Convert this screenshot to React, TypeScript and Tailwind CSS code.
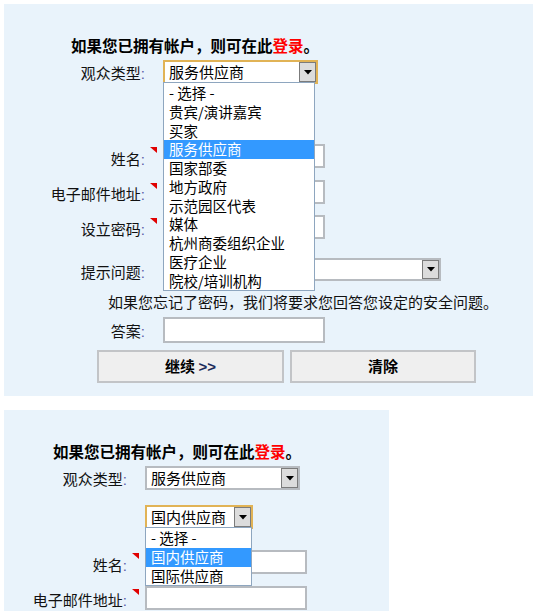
import React from "react";

const Arrow = () => (
  <span className="flex h-full w-[17px] shrink-0 items-center justify-center border border-[#7b7b7b] bg-[#dcdcdc]">
    <svg width="8" height="5" viewBox="0 0 8 5">
      <polygon points="0,0 8,0 4,4.5" fill="#000" />
    </svg>
  </span>
);

function Select({
  value,
  className,
  focused,
  children,
}: {
  value: string;
  className: string;
  focused?: boolean;
  children?: React.ReactNode;
}) {
  return (
    <div
      className={
        "relative flex items-center bg-white " +
        (focused ? "border-2 border-[#e1b356] " : "border-2 border-[#b7bbc0] ") +
        className
      }
    >
      <span className="flex-1 overflow-hidden whitespace-nowrap pl-[4px] text-[15px] leading-[18px] text-black">
        {value}
      </span>
      <Arrow />
      {children}
    </div>
  );
}

function List({
  items,
  selected,
  className,
}: {
  items: string[];
  selected: number;
  className: string;
}) {
  return (
    <div
      className={
        "absolute left-[-2px] top-full z-10 border border-[#8ea6bf] bg-white pt-[1px] " + className
      }
    >
      {items.map((t, i) => (
        <div
          key={i}
          className={
            "h-[18.75px] whitespace-nowrap pl-[5px] text-[14.5px] leading-[18.75px] " +
            (i === selected ? "bg-[#3399ff] text-white" : "text-black")
          }
        >
          {t}
        </div>
      ))}
    </div>
  );
}

const Marker = () => (
  <svg className="ml-[5px] mt-[3px] block" width="7" height="6" viewBox="0 0 7 6">
    <polygon points="0,0 7,0 7,6" fill="#e00000" />
  </svg>
);

function Row({
  label,
  labelW,
  labelPt,
  marker,
  children,
  className,
}: {
  label?: string;
  labelW: string;
  labelPt: string;
  marker?: boolean;
  children: React.ReactNode;
  className: string;
}) {
  return (
    <div className={"flex items-start " + className}>
      <div
        className={
          "shrink-0 whitespace-nowrap text-right text-[15px] leading-[18px] text-[#111] " + labelW + " " + labelPt
        }
      >
        {label}
        {label && <span className="font-['Liberation_Sans'] text-[#5b5ba8]">:</span>}
      </div>
      <div className="w-[18px] shrink-0">{marker && <Marker />}</div>
      {children}
    </div>
  );
}

const Input = ({ className }: { className: string }) => (
  <div className={"w-[162px] border-2 border-[#b7bbc0] bg-white " + className} />
);

const mainItems = [
  "- 选择 -",
  "贵宾/演讲嘉宾",
  "买家",
  "服务供应商",
  "国家部委",
  "地方政府",
  "示范园区代表",
  "媒体",
  "杭州商委组织企业",
  "医疗企业",
  "院校/培训机构",
];

function Form({ variant }: { variant: 1 | 2 }) {
  const one = variant === 1;
  const labelW = one ? "w-[141px]" : "w-[123px]";
  return (
    <div
      className={
        "bg-[#e9f3fb] pt-[32px] pb-[13px] font-['Noto_Sans_CJK_SC',sans-serif] " +
        (one ? "w-[529px]" : "w-[385px]")
      }
    >
      <div
        className={
          "whitespace-nowrap text-[15.5px] font-bold leading-[18px] text-black " +
          (one ? "pl-[67px]" : "pl-[49px]")
        }
      >
        如果您已拥有帐户，则可在此<span className="text-[#ff0000]">登录</span>。
      </div>

      <Row label="观众类型" labelW={labelW} labelPt="pt-[4px]" className="mt-[6px]">
        <Select value="服务供应商" className="h-[24px] w-[155px]" focused={one}>
          {one && <List items={mainItems} selected={3} className="w-[152px]" />}
        </Select>
      </Row>

      <Row labelW={labelW} labelPt="pt-[4px]" className="mt-[15px]">
        <Select value="国内供应商" className="h-[24px] w-[108px]" focused={!one}>
          {!one && (
            <List items={["- 选择 -", "国内供应商", "国际供应商"]} selected={1} className="w-[107px]" />
          )}
        </Select>
      </Row>

      <Row label="姓名" labelW={labelW} labelPt="pt-[6px]" marker className="mt-[21px]">
        <Input className="h-[24px]" />
      </Row>

      <Row label="电子邮件地址" labelW={labelW} labelPt="pt-[5px]" marker className="mt-[11px]">
        <Input className="h-[24px]" />
      </Row>

      <Row label="设立密码" labelW={labelW} labelPt="pt-[5px]" marker className="mt-[11px]">
        <Input className="h-[24px]" />
      </Row>

      <Row label="提示问题" labelW={labelW} labelPt="pt-[5px]" className="mt-[19px]">
        <Select value="" className="h-[23px] w-[278px]" />
      </Row>

      <div
        className={
          "mt-[11px] whitespace-nowrap text-[15px] leading-[18px] text-[#111] " +
          (one ? "pl-[104px]" : "pl-[86px]")
        }
      >
        如果您忘记了密码，我们将要求您回答您设定的安全问题。
      </div>

      <Row label="答案" labelW={labelW} labelPt="pt-[5px]" className="mt-[6px]">
        <Input className="h-[26px] w-[161px]" />
      </Row>

      <div className={"mt-[7px] flex gap-[6px] " + (one ? "pl-[93px]" : "pl-[75px]")}>
        <button className="h-[33px] w-[187px] border-2 border-[#c2c4c7] bg-[#efefef] text-[15px] font-bold text-black">
          继续 <span className="font-['Liberation_Sans'] text-[#1b2a5a]">&gt;&gt;</span>
        </button>
        <button className="h-[33px] w-[186px] border-2 border-[#c2c4c7] bg-[#efefef] text-[15px] font-bold text-black">
          清除
        </button>
      </div>
    </div>
  );
}

export default function App() {
  return (
    <div className="h-[611px] w-[551px] overflow-hidden bg-white pl-[4px] pt-[4px]">
      <Form variant={1} />
      <div className="mt-[14px]">
        <Form variant={2} />
      </div>
    </div>
  );
}
